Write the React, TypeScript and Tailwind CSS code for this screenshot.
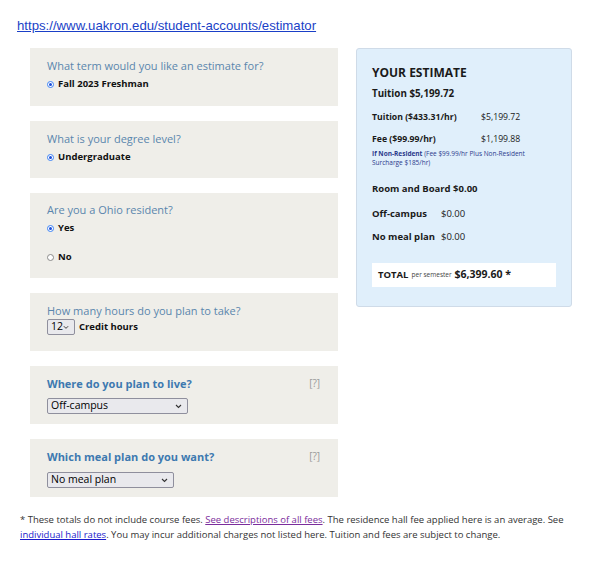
import React from 'react';

const sans = { fontFamily: '"Open Sans", "Liberation Sans", sans-serif' };

function Radio({ checked }: { checked: boolean }) {
  return (
    <span
      className={`inline-flex h-[7px] w-[7px] items-center justify-center rounded-full border ${
        checked ? 'border-[#3b82f6] bg-white' : 'border-[#8a8a8a] bg-white'
      }`}
    >
      {checked && <span className="h-[3px] w-[3px] rounded-full bg-[#1d4ed8]" />}
    </span>
  );
}

function FakeSelect({ label, width }: { label: string; width: string }) {
  return (
    <div
      className={`flex h-[16px] ${width} items-center justify-between rounded-[2px] border border-[#8f8f9d] bg-[#e9e9ed] pl-[3px] pr-[5px] text-[10.5px] text-black`}
    >
      <span>{label}</span>
      <svg width="7" height="5" viewBox="0 0 7 5" fill="none">
        <path d="M1 1l2.5 2.5L6 1" stroke="#333" strokeWidth="1.1" />
      </svg>
    </div>
  );
}

export default function App() {
  return (
    <div className="min-h-screen bg-white pt-[14px] text-[#222]" style={sans}>
      <div className="pl-[17px] leading-[20px]">
        <a
          href="#"
          className="text-[13.2px] leading-[20px] text-[#1a3fc7] underline"
          style={{ fontFamily: '"Liberation Sans", Arial, sans-serif' }}
        >
          https://www.uakron.edu/student-accounts/estimator
        </a>
      </div>

      <div className="mt-[12px] flex gap-[18px] pl-[30px]">
        {/* left column */}
        <div className="flex w-[308px] flex-col gap-[15px]">
          <div className="h-[58px] bg-[#efeee9] px-[17px] pt-[9px]">
            <div className="text-[11px] leading-[17px] text-[#5a86ad]">What term would you like an estimate for?</div>
            <label className="mt-[3px] flex items-center gap-[4px] text-[9.5px] font-bold leading-[14px] text-[#111]">
              <Radio checked /> Fall 2023 Freshman
            </label>
          </div>

          <div className="h-[57px] bg-[#efeee9] px-[17px] pt-[9px]">
            <div className="text-[11px] leading-[17px] text-[#5a86ad]">What is your degree level?</div>
            <label className="mt-[3px] flex items-center gap-[4px] text-[9.5px] font-bold leading-[14px] text-[#111]">
              <Radio checked /> Undergraduate
            </label>
          </div>

          <div className="h-[85px] bg-[#efeee9] px-[17px] pt-[8px]">
            <div className="text-[11px] leading-[17px] text-[#5a86ad]">Are you a Ohio resident?</div>
            <label className="mt-[3px] flex items-center gap-[4px] text-[9.5px] font-bold leading-[14px] text-[#111]">
              <Radio checked /> Yes
            </label>
            <label className="mt-[15px] flex items-center gap-[4px] text-[9.5px] font-bold leading-[14px] text-[#111]">
              <Radio checked={false} /> No
            </label>
          </div>

          <div className="h-[58px] bg-[#efeee9] px-[17px] pt-[9px]">
            <div className="text-[11px] leading-[17px] text-[#5a86ad]">How many hours do you plan to take?</div>
            <div className="flex items-center gap-[4px]">
              <FakeSelect label="12" width="w-[28px]" />
              <span className="text-[9.5px] font-bold text-[#111]">Credit hours</span>
            </div>
          </div>

          <div className="h-[58px] bg-[#efeee9] px-[17px] pt-[9px]">
            <div className="flex items-center justify-between">
              <div className="text-[11px] font-bold leading-[17px] text-[#3d79b0]">Where do you plan to live?</div>
              <span className="mr-[1px] text-[10px] text-[#9a9a9a]">[?]</span>
            </div>
            <div className="mt-[6px]">
              <FakeSelect label="Off-campus" width="w-[141px]" />
            </div>
          </div>

          <div className="h-[58px] bg-[#efeee9] px-[17px] pt-[9px]">
            <div className="flex items-center justify-between">
              <div className="text-[11px] font-bold leading-[17px] text-[#3d79b0]">Which meal plan do you want?</div>
              <span className="mr-[1px] text-[10px] text-[#9a9a9a]">[?]</span>
            </div>
            <div className="mt-[7px]">
              <FakeSelect label="No meal plan" width="w-[127px]" />
            </div>
          </div>
        </div>

        {/* right column */}
        <div className="self-start">
          <div className="h-[259px] w-[216px] rounded-[3px] border border-[#cfdbe8] bg-[#e0effb] px-[15px] pt-[15px]">
            <div className="text-[12px] font-bold leading-[17px] text-[#1a1a1a]">YOUR ESTIMATE</div>
            <div className="mt-[6px] text-[9.8px] font-bold leading-[14px] text-[#1a1a1a]">Tuition $5,199.72</div>

            <div className="mt-[10px] grid grid-cols-[109px_1fr] text-[8.7px] leading-[13px] text-[#1a1a1a]">
              <span className="font-bold">Tuition ($433.31/hr)</span>
              <span>$5,199.72</span>
            </div>
            <div className="mt-[9px] grid grid-cols-[109px_1fr] text-[8.7px] leading-[13px] text-[#1a1a1a]">
              <span className="font-bold">Fee ($99.99/hr)</span>
              <span>$1,199.88</span>
            </div>
            <div className="mt-[3px] text-[6.5px] leading-[9px] text-[#2b3a8c]">
              <span className="font-bold">If Non-Resident</span> (Fee $99.99/hr Plus Non-Resident
              <br />
              Surcharge $185/hr)
            </div>

            <div className="mt-[15px] text-[9.5px] font-bold leading-[13px] text-[#1a1a1a]">Room and Board $0.00</div>
            <div className="mt-[12px] grid grid-cols-[69px_1fr] text-[9.5px] leading-[13px] text-[#1a1a1a]">
              <span className="font-bold">Off-campus</span>
              <span>$0.00</span>
            </div>
            <div className="mt-[10px] grid grid-cols-[69px_1fr] text-[9.5px] leading-[13px] text-[#1a1a1a]">
              <span className="font-bold">No meal plan</span>
              <span>$0.00</span>
            </div>

            <div className="mt-[20px] flex h-[24px] items-center bg-white px-[6px] text-[#1a1a1a]">
              <span className="text-[9.5px] font-bold">TOTAL</span>
              <span className="ml-[3px] text-[6.5px] text-[#444]">per semester</span>
              <span className="ml-[3px] text-[10.5px] font-bold">$6,399.60 *</span>
            </div>
          </div>
        </div>
      </div>

      <div className="mt-[15px] pl-[20px] pr-[20px] text-[9.5px] leading-[15px] text-[#333]">
        * These totals do not include course fees.{' '}
        <a href="#" className="text-[#7b2d9c] underline">See descriptions of all fees</a>. The residence hall fee applied here is an average. See{' '}
        <a href="#" className="text-[#1a1acc] underline">individual hall rates</a>. You may incur additional charges not listed here. Tuition and fees are subject to change.
      </div>
    </div>
  );
}
